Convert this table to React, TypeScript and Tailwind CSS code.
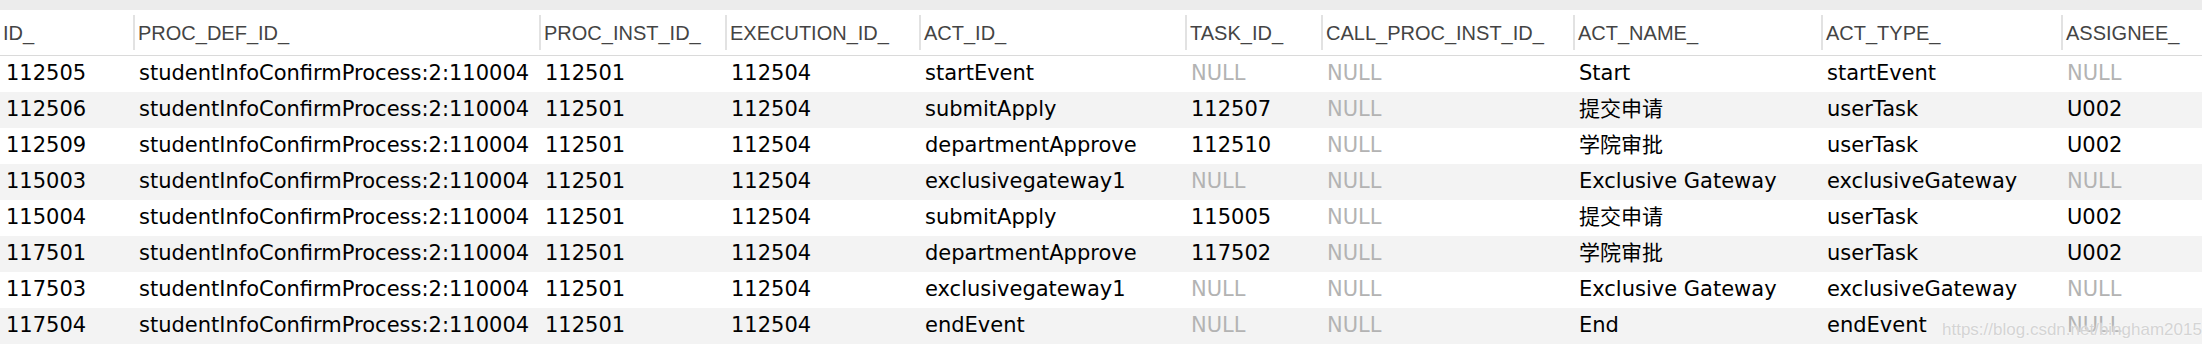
const columns = [
  { name: 'ID_', width: 133 },
  { name: 'PROC_DEF_ID_', width: 406 },
  { name: 'PROC_INST_ID_', width: 186 },
  { name: 'EXECUTION_ID_', width: 194 },
  { name: 'ACT_ID_', width: 266 },
  { name: 'TASK_ID_', width: 136 },
  { name: 'CALL_PROC_INST_ID_', width: 252 },
  { name: 'ACT_NAME_', width: 248 },
  { name: 'ACT_TYPE_', width: 240 },
  { name: 'ASSIGNEE_', width: 141 },
];

const DEF = 'studentInfoConfirmProcess:2:110004';

const rows: (string | null)[][] = [
  ['112505', DEF, '112501', '112504', 'startEvent', null, null, 'Start', 'startEvent', null],
  ['112506', DEF, '112501', '112504', 'submitApply', '112507', null, '提交申请', 'userTask', 'U002'],
  ['112509', DEF, '112501', '112504', 'departmentApprove', '112510', null, '学院审批', 'userTask', 'U002'],
  ['115003', DEF, '112501', '112504', 'exclusivegateway1', null, null, 'Exclusive Gateway', 'exclusiveGateway', null],
  ['115004', DEF, '112501', '112504', 'submitApply', '115005', null, '提交申请', 'userTask', 'U002'],
  ['117501', DEF, '112501', '112504', 'departmentApprove', '117502', null, '学院审批', 'userTask', 'U002'],
  ['117503', DEF, '112501', '112504', 'exclusivegateway1', null, null, 'Exclusive Gateway', 'exclusiveGateway', null],
  ['117504', DEF, '112501', '112504', 'endEvent', null, null, 'End', 'endEvent', null],
];

export default function App() {
  return (
    <div className="relative w-[2202px] h-[350px] overflow-hidden bg-white">
      {/* toolbar strip */}
      <div className="h-[10px] bg-[#ececec]" />

      {/* header */}
      <div className="flex h-[46px] border-b border-[#dadada] bg-white font-['Liberation_Sans',Arial,sans-serif] text-[20px] text-[#444]">
        {columns.map((col, i) => (
          <div key={col.name} className="flex items-center shrink-0" style={{ width: col.width }}>
            {i > 0 && <div className="w-[2px] h-[35px] bg-[#e2e2e2]" />}
            <span className="ml-[3px] whitespace-nowrap">{col.name}</span>
          </div>
        ))}
      </div>

      {/* rows */}
      <div className="font-['DejaVu_Sans','Noto_Sans_CJK_SC',sans-serif] text-[21px]">
        {rows.map((row, r) => (
          <div key={r} className={`flex h-[36px] items-center ${r % 2 === 1 ? 'bg-[#f3f3f3]' : 'bg-white'}`}>
            {row.map((cell, c) => (
              <div
                key={c}
                className="shrink-0 pl-[6px] whitespace-nowrap overflow-hidden"
                style={{ width: columns[c].width }}
              >
                {cell === null ? (
                  <span className="text-[#b3b3b3]">NULL</span>
                ) : (
                  <span className="text-black">{cell}</span>
                )}
              </div>
            ))}
          </div>
        ))}
      </div>

      {/* watermark */}
      <div className="absolute left-[1942px] top-[320px] font-['Liberation_Sans',Arial,sans-serif] text-[17px] leading-[20px] text-[#d4d4d4] [text-shadow:0_0_2px_#ffffff] whitespace-nowrap">
        https://blog.csdn.net/bingham2015
      </div>
    </div>
  );
}
